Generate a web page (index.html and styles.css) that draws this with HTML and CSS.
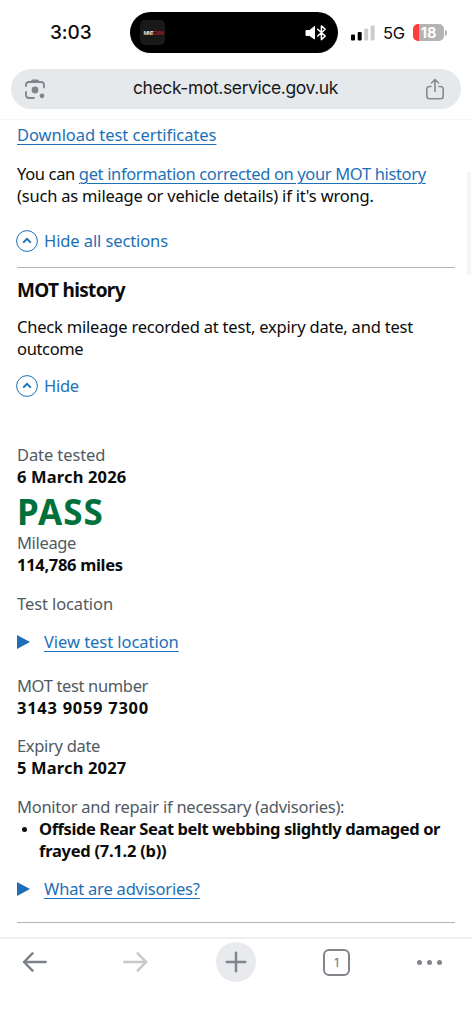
FILE: index.html
```
<!DOCTYPE html>
<html lang="en">
<head>
<meta charset="utf-8">
<title>Check MOT history</title>
<link rel="stylesheet" href="styles.css">
</head>
<body>
<div class="phone">
  <header class="chrome">
    <div class="status">
      <span class="clock">3:03</span>
      <div class="island">
        <span class="app-icon"><b>MNT</b><i>GYM</i></span>
        <svg class="audio" width="22" height="18" viewBox="0 0 22 18">
          <path d="M1 6.500h3.500L9.500 2.500v12.500L4.500 11.500H1z" fill="#fff" stroke="#fff" stroke-linejoin="round"/>
          <path d="M12.700 5.300l7.500 6.700-3.800 3.600V1.900l3.800 3.400-7.500 6.700" fill="none" stroke="#fff" stroke-width="1.500" stroke-linejoin="round" stroke-linecap="round"/>
        </svg>
      </div>
      <svg class="signal" width="24" height="16" viewBox="0 0 24 16">
        <rect x="0" y="9.500" width="4" height="6" rx="1"/>
        <rect x="6.700" y="7" width="4" height="8.500" rx="1"/>
        <rect x="13.200" y="3.500" width="4" height="12" rx="1" fill="#ccc"/>
        <rect x="19.600" y="0.500" width="4" height="15" rx="1" fill="#ccc"/>
      </svg>
      <span class="network">5G</span>
      <span class="battery">18</span>
      <span class="battery-tip"></span>
    </div>
    <div class="omnibox">
      <svg width="22" height="22" viewBox="0 0 22 22" fill="none" stroke="#80868b" stroke-width="1.800" stroke-linecap="round">
        <path d="M2 8V7A3 3 0 0 1 5 4H17A3 3 0 0 1 20 7V9.500M2 14V17A3 3 0 0 0 5 20H10"/>
        <path d="M7.500 3.500L8.500 2.300H13.500L14.500 3.500z" fill="#80868b" stroke-linejoin="round"/>
        <circle cx="11" cy="12" r="3.400" fill="#80868b" stroke="none"/>
        <circle cx="18" cy="17.800" r="2.400" fill="#80868b" stroke="none"/>
      </svg>
      <span class="url">check-mot.service.gov.uk</span>
      <svg width="20" height="22" viewBox="0 0 20 22" fill="none" stroke="#868b90" stroke-width="1.600" stroke-linecap="round" stroke-linejoin="round">
        <path d="M6 8.500H4.500A2.700 2.700 0 0 0 1.800 11.200V18A2.700 2.700 0 0 0 4.500 20.700H15.500A2.700 2.700 0 0 0 18.200 18V11.200A2.700 2.700 0 0 0 15.500 8.500H14M10 13.500V1.500M6.500 5L10 1.500L13.500 5"/>
      </svg>
    </div>
  </header>

  <main class="page">
    <p class="para certificates"><a href="#" class="snug-1">Download test certificates</a></p>
    <p class="para correction"><span class="snug-7">You can <a href="#">get information corrected on your MOT history</a></span><br><span class="snug-4">(such as mileage or vehicle details) if it's wrong.</span></p>
    <div class="toggle all"><svg width="22" height="22" viewBox="0 0 22 22"><circle cx="11" cy="11" r="10.400"/><path d="M7.200 12.600L11 8.800L14.800 12.600"/></svg><span class="snug-2">Hide all sections</span></div>

    <section class="section">
      <h2>MOT history</h2>
      <p class="para summary"><span class="snug-4">Check mileage recorded at test, expiry date, and test</span><br><span class="snug-7">outcome</span></p>
      <div class="toggle"><svg width="22" height="22" viewBox="0 0 22 22"><circle cx="11" cy="11" r="10.400"/><path d="M7.200 12.600L11 8.800L14.800 12.600"/></svg><span class="snug-5">Hide</span></div>

      <div class="test">
        <div class="label snug-2">Date tested</div>
        <div class="value wide-1">6 March 2026</div>
        <div class="result">PASS</div>
        <div class="label snug-7">Mileage</div>
        <div class="value snug-6">114,786 miles</div>
        <div class="label gap snug-2">Test location</div>
        <div class="details location"><i></i><a href="#" class="snug-1">View test location</a></div>
        <div class="label number snug-7">MOT test number</div>
        <div class="value wide-2">3143 9059 7300</div>
        <div class="label gap snug-6">Expiry date</div>
        <div class="value wide-1">5 March 2027</div>
        <div class="label gap snug-5">Monitor and repair if necessary (advisories):</div>
        <ul><li><span class="snug-8">Offside Rear Seat belt webbing slightly damaged or</span><br><span class="snug-5">frayed (7.1.2 (b))</span></li></ul>
        <div class="details advisories"><i></i><a href="#" class="snug-4">What are advisories?</a></div>
      </div>
    </section>
    <span class="scrollbar"></span>
  </main>

  <nav class="toolbar">
    <svg width="26" height="22" viewBox="0 0 26 22" stroke="#7c8288"><path d="M23.700 11H2M10.500 2.300L2 11L10.500 19.700"/></svg>
    <svg width="26" height="22" viewBox="0 0 26 22" stroke="#c8c8c8"><path d="M2.300 11H24.200M15.700 2.300L24.200 11L15.700 19.700"/></svg>
    <span class="new-tab"><svg width="22" height="22" viewBox="0 0 22 22" stroke="#80868b"><path d="M1.800 11H20.200M11 1.800V20.200"/></svg></span>
    <span class="tabs">1</span>
    <span class="more"><i></i><i></i><i></i></span>
  </nav>
</div>
</body>
</html>
```
FILE: styles.css
```
* { box-sizing: border-box; }
body { margin: 0; background: #fff; }
.phone {
  width: 472px; height: 1024px; overflow: hidden;
  display: flex; flex-direction: column;
  font: 16.5px/22px "Noto Sans", sans-serif; color: #0b0c0c;
}
.chrome { height: 120px; border-bottom: 1px solid #f5f5f5; flex: none; }
.status {
  height: 53px; padding-top: 12px; display: flex; align-items: center;
  font-family: Inter, sans-serif;
}
.clock { width: 130px; padding-left: 50px; font-size: 19px; font-weight: 500; letter-spacing: -.1px; }
.island {
  width: 208px; height: 41px; border-radius: 21px; background: #000; flex: none;
  display: flex; align-items: center; justify-content: space-between; padding: 0 11px 0 10px;
}
.app-icon {
  width: 25px; height: 25px; border-radius: 5px; background: #191919;
  display: flex; align-items: center; justify-content: center;
  font: 700 6px/8px "Liberation Sans", sans-serif; color: #ddd;
}
.app-icon b, .app-icon i { font-style: normal; width: 9px; letter-spacing: -1.3px; }
.app-icon i { color: #a01c28; }
.signal { margin-left: 13px; flex: none; }
.network { margin-left: 8px; width: 30px; font-size: 16.5px; letter-spacing: -.3px; }
.battery {
  width: 31px; height: 17px; border-radius: 5px; flex: none;
  background: linear-gradient(90deg, #ff3b3f 6px, #b3b3b3 6px);
  color: #fff; font-size: 14.5px; font-weight: 700; line-height: 17px; text-align: center;
}
.battery-tip { width: 2px; height: 6px; margin-left: 1px; border-radius: 0 2px 2px 0; background: #b3b3b3; }
.omnibox {
  margin: 16px 11px 0; height: 40px; border-radius: 20px; background: #e6e9ec;
  display: flex; align-items: center; justify-content: space-between; padding: 0 16px 0 13px;
}
.url { font: 17.5px/22px Inter, sans-serif; letter-spacing: -.4px; color: #17191b; margin-top: -2px; }

.page { height: 817px; padding: 4px 17px 0 17px; position: relative; flex: none; }
.scrollbar { position: absolute; right: 1px; top: 52px; width: 4px; height: 103px; background: #f5f5f5; }
a { color: #1d70b8; text-decoration: underline; text-decoration-thickness: 1px; text-underline-offset: 3px; }
.para { margin: 0; white-space: nowrap; }
.correction { margin-top: 17px; }
.toggle { display: flex; align-items: center; gap: 6px; height: 22px; color: #1d70b8; }
.toggle svg { margin-left: -1px; fill: none; stroke: #1d70b8; }
.toggle path { stroke-width: 2; }
.all { margin-top: 23px; }
.section { margin-top: 15px; border-top: 1px solid #b1b4b6; border-bottom: 1px solid #b1b4b6; height: 656px; }
h2 { margin: 10px 0 0; font-size: 19px; line-height: 24px; font-weight: 700; letter-spacing: -.68px; }
.summary { margin: 14px 0 15px; }
.test { padding-top: 47px; }
.label { color: #505a5f; white-space: nowrap; }
.value, li { font-weight: 700; white-space: nowrap; }
.result { height: 44px; font-size: 35px; line-height: 44px; padding-top: 2px; color: #00703c; font-weight: 700; letter-spacing: 1px; }
.gap { margin-top: 16.5px; }
.details { display: flex; align-items: center; height: 22px; }
.details i { border-left: 13px solid #1d70b8; border-top: 7px solid transparent; border-bottom: 7px solid transparent; margin-right: 14px; }
.location { margin-top: 16.5px; }
.number { margin-top: 21.5px; }
ul { margin: 0; padding-left: 22px; }
li::marker { font-size: 14px; }
.advisories { margin-top: 16px; }

/* Tracking steps */
.snug-1 { letter-spacing: -.05px; }
.snug-2 { letter-spacing: -.1px; }
.snug-4 { letter-spacing: -.2px; }
.snug-5 { letter-spacing: -.26px; }
.snug-6 { letter-spacing: -.31px; }
.snug-7 { letter-spacing: -.35px; }
.snug-8 { letter-spacing: -.42px; }
.wide-1 { letter-spacing: .16px; }
.wide-2 { letter-spacing: .72px; }

.toolbar {
  height: 87px; border-top: 2px solid #eee; flex: none;
  display: flex; align-items: flex-start; padding: 3px 0 0 22px;
}
.toolbar svg { fill: none; stroke-width: 2.5; stroke-linecap: round; stroke-linejoin: round; }
.toolbar > svg { margin: 9px 74px 0 0; }
.new-tab { width: 40px; height: 40px; margin-left: -6px; border-radius: 50%; background: #e8eaed; display: flex; align-items: center; justify-content: center; }
.tabs { width: 27px; height: 27px; margin: 7px 67px 0; border: 2px solid #80868b; border-radius: 6px; font: 500 12px/23px Inter, sans-serif; text-align: center; color: #80868b; }
.more { display: flex; gap: 5px; margin-top: 18px; }
.more i { width: 5px; height: 5px; border-radius: 50%; background: #80868b; }
```
